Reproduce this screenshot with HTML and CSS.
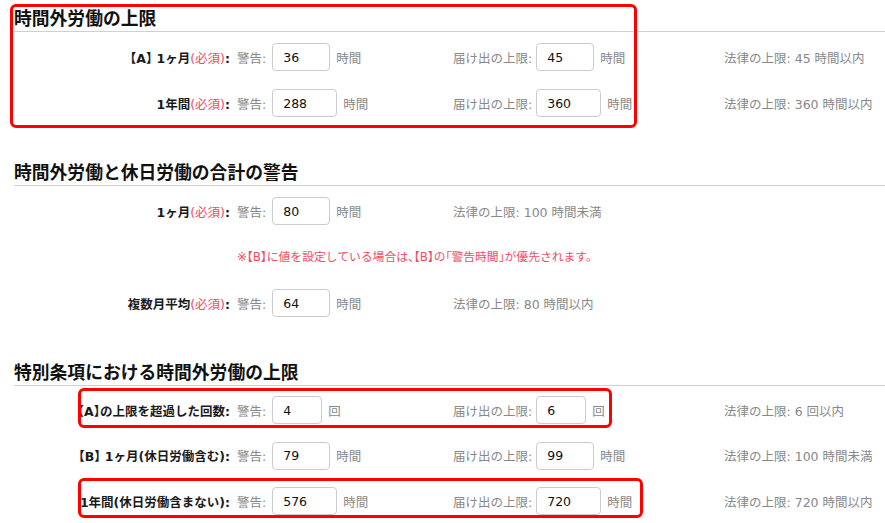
FILE: index.html
```html
<html>
<head>
  <title>時間外労働の上限設定</title>
  <meta charset="UTF-8">
  <link rel="stylesheet" href="styles.css">
</head>
<body>
  <div class="page">

    <section class="group">
      <h2 class="group-title">時間外労働の上限</h2>
      <div class="rows">
        <div class="label">【A】 1ヶ月<span class="req">(必須)</span>:</div>
        <div class="field"><span class="cap">警告:</span><input class="num w2" value="36"><span class="unit">時間</span></div>
        <div class="field limit"><span class="cap">届け出の上限:</span><input class="num w2" value="45"><span class="unit">時間</span></div>
        <div class="law">法律の上限: 45 時間以内</div>

        <div class="label">1年間<span class="req">(必須)</span>:</div>
        <div class="field"><span class="cap">警告:</span><input class="num w3" value="288"><span class="unit">時間</span></div>
        <div class="field limit"><span class="cap">届け出の上限:</span><input class="num w3" value="360"><span class="unit">時間</span></div>
        <div class="law">法律の上限: 360 時間以内</div>
      </div>
    </section>

    <section class="group">
      <h2 class="group-title">時間外労働と休日労働の合計の警告</h2>
      <div class="rows">
        <div class="label">1ヶ月<span class="req">(必須)</span>:</div>
        <div class="field"><span class="cap">警告:</span><input class="num w2" value="80"><span class="unit">時間</span></div>
        <div class="law wide">法律の上限: 100 時間未満</div>

        <div class="note">※【B】に値を設定している場合は、【B】の「警告時間」が優先されます。</div>

        <div class="label">複数月平均<span class="req">(必須)</span>:</div>
        <div class="field"><span class="cap">警告:</span><input class="num w2" value="64"><span class="unit">時間</span></div>
        <div class="law wide">法律の上限: 80 時間以内</div>
      </div>
    </section>

    <section class="group">
      <h2 class="group-title">特別条項における時間外労働の上限</h2>
      <div class="rows tight">
        <div class="label">【A】の上限を超過した回数:</div>
        <div class="field"><span class="cap">警告:</span><input class="num w1" value="4"><span class="unit">回</span></div>
        <div class="field limit"><span class="cap">届け出の上限:</span><input class="num w1" value="6"><span class="unit">回</span></div>
        <div class="law">法律の上限: 6 回以内</div>

        <div class="label">【B】 1ヶ月(休日労働含む):</div>
        <div class="field"><span class="cap">警告:</span><input class="num w2" value="79"><span class="unit">時間</span></div>
        <div class="field limit"><span class="cap">届け出の上限:</span><input class="num w2" value="99"><span class="unit">時間</span></div>
        <div class="law">法律の上限: 100 時間未満</div>

        <div class="label">1年間(休日労働含まない):</div>
        <div class="field"><span class="cap">警告:</span><input class="num w3" value="576"><span class="unit">時間</span></div>
        <div class="field limit"><span class="cap">届け出の上限:</span><input class="num w3" value="720"><span class="unit">時間</span></div>
        <div class="law">法律の上限: 720 時間以内</div>
      </div>
    </section>

    <!-- annotation boxes drawn over the form -->
    <div class="mark mark-monthly"></div>
    <div class="mark mark-count"></div>
    <div class="mark mark-yearly"></div>
  </div>
</body>
</html>
```

FILE: styles.css
```css
body {
  margin: 0;
  background: #fff;
  font-family: 'DejaVu Sans', 'Noto Sans CJK JP', sans-serif;
  font-size: 12.5px;
  font-feature-settings: "halt";
  color: #222;
}

.page {
  position: relative;
  padding: 5px 0 0 14px;
}

.group + .group {
  margin-top: 42px;
}

.group-title {
  margin: 0;
  font-family: 'Noto Sans CJK JP', sans-serif;
  font-size: 17.8px;
  line-height: 24px;
  font-weight: bold;
  color: #111;
  padding-bottom: 2px;
  border-bottom: 1px solid #d0d0d0;
}

.rows {
  display: grid;
  grid-template-columns: 223px 216px 271px 1fr;
  grid-auto-rows: 28px;
  row-gap: 18px;
  margin-top: 11px;
  align-items: center;
}

.rows.tight {
  margin-top: 10px;
  row-gap: 17.5px;
}

.label {
  text-align: right;
  padding-right: 7px;
  font-weight: bold;
  color: #1a1a1a;
  white-space: nowrap;
}

.req {
  color: #ea4d63;
  font-weight: normal;
}

.field {
  display: flex;
  align-items: center;
  white-space: nowrap;
}

.cap,
.unit,
.law {
  color: #888;
}

.law {
  white-space: nowrap;
}

.law.wide {
  grid-column: 3 / 5;
}

.note {
  grid-column: 2 / 5;
  color: #f04c68;
  font-size: 11.8px;
  height: 26px;
  line-height: 26px;
}

.num {
  box-sizing: border-box;
  height: 28px;
  margin: 0 6px 0 6px;
  padding: 0 10px;
  border: 1px solid #ccc;
  border-radius: 4px;
  font-family: 'DejaVu Sans', sans-serif;
  font-size: 12.5px;
  color: #111;
  background: #fff;
}

.limit .num {
  margin-left: 4px;
}

.w1 { width: 50px; }
.w2 { width: 58px; }
.w3 { width: 65px; }

.mark {
  position: absolute;
  box-sizing: border-box;
  border: 3px solid #f00;
  border-radius: 6px;
  pointer-events: none;
}

.mark-monthly {
  left: 10px;
  top: 4px;
  width: 627px;
  height: 124px;
}

.mark-count {
  left: 78px;
  top: 388px;
  width: 534px;
  height: 40px;
}

.mark-yearly {
  left: 78px;
  top: 478px;
  width: 565px;
  height: 40px;
}
```
